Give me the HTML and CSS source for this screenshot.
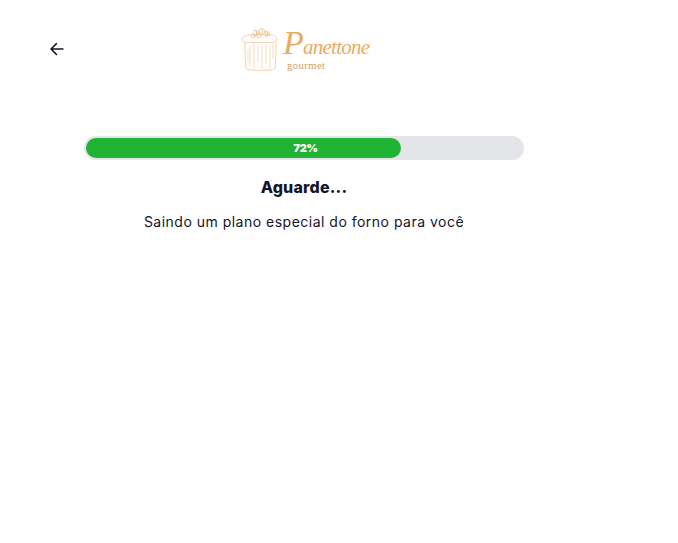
FILE: index.html
```html
<!DOCTYPE html>
<html lang="pt-BR">
<head>
<meta charset="utf-8">
<title>Panettone Gourmet</title>
<link rel="stylesheet" href="styles.css">
</head>
<body>
<header class="header">
  <button class="back" aria-label="Voltar">
    <svg width="16" height="16" viewBox="0 0 16 16" fill="none" stroke="#14142b" stroke-width="1.5" stroke-linecap="round" stroke-linejoin="round"><path d="M14 8H2.4M7.4 2.6 2 8l5.4 5.4"/></svg>
  </button>
  <div class="logo">
    <svg class="logo-mark" width="38" height="44" viewBox="0 0 38 44" fill="none" stroke="#f0c593" stroke-width="0.8" stroke-linecap="round" stroke-linejoin="round">
      <path d="M3 15C0 13 1 9 5 9c2-1 4-1 6-1 6-1 14-1 20 0 4 0 6 4 4 6-1 2-5 2-7 1-6 1-14 1-19 0-3 1-7 2-6 0Z"/>
      <path d="M4 16c0 8 0 18 1 25 1 2 4 2 7 2 5 1 10 1 15 0 3 0 6 0 7-2 1-7 1-17 1-25"/>
      <path d="M9 19v20M13 17v24M17 19v16M21 18v24M25 17v20M29 19v22M32 17v14M7 23v12" stroke-width="0.6"/>
      <circle cx="15" cy="6" r="3"/><circle cx="21" cy="4.5" r="3"/><circle cx="26" cy="7" r="2.6"/><circle cx="18" cy="9" r="2"/><circle cx="12" cy="9" r="2"/>
      <path d="M15 4c1 1 1 3 0 4M21 3c1 1 1 2 0 3M26 5c1 1 1 3-1 4" stroke="#e4a45c"/>
    </svg>
    <div class="wordmark">
      <span class="brand">Panettone</span>
      <span class="sub">gourmet</span>
    </div>
  </div>
</header>
<main class="content">
  <div class="track"><div class="fill" style="width:72.2%"><span class="pct">72%</span></div></div>
  <h1 class="title">Aguarde...</h1>
  <p class="text">Saindo um plano especial do forno para você</p>
</main>
</body>
</html>
```
FILE: styles.css
```css
* { box-sizing: border-box; }
html, body { margin: 0; padding: 0; background: #fff; }
body { width: 678px; height: 543px; overflow: hidden; font-family: Inter, "Noto Sans", sans-serif; color: #14142b; }
.header { display: flex; align-items: center; height: 98px; width: 608px; padding-left: 49px; }
.back { display: flex; width: 16px; height: 16px; padding: 0; border: 0; background: none; }
.logo { display: flex; align-items: center; gap: 4px; margin-left: 176px; }
.logo-mark { display: block; }
.wordmark { display: flex; flex-direction: column; width: 85px; }
.brand { display: block; font-family: "Liberation Serif", serif; font-style: italic; font-size: 21px; line-height: 27px; letter-spacing: -0.75px; color: #e9ac62; white-space: nowrap; }
.brand::first-letter { font-size: 34px; }
.sub { align-self: flex-start; font-family: "Liberation Serif", serif; font-size: 10.5px; line-height: 9px; color: #cf9c62; margin-left: 4px; letter-spacing: 0.5px; }
.content { display: flex; flex-direction: column; align-items: center; width: 440px; margin: 38px 0 0 84px; }
.track { width: 100%; height: 24px; padding: 2px; border-radius: 12px; background: #e4e5e9; }
.fill { display: flex; align-items: center; justify-content: flex-end; height: 20px; padding-right: 83px; border-radius: 10px; background: #1fb233; }
.pct { font-size: 11px; font-weight: 900; color: #fff; line-height: 20px; letter-spacing: -0.3px; }
.title { margin: 15px 0 0; font-size: 16px; font-weight: 800; line-height: 24px; letter-spacing: 0.2px; }
.text { margin: 13px 0 0; font-size: 14px; font-weight: 400; line-height: 20px; letter-spacing: 0.49px; color: #14142b; }
```
